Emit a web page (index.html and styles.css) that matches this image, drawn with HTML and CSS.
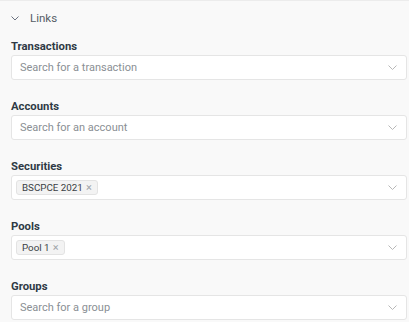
FILE: index.html
```html
<!DOCTYPE html>
<html>

<head>
  <meta charset="UTF-8">
  <title>Links</title>
  <link rel="stylesheet" href="styles.css">
</head>

<body>
  <div class="panel">
    <div class="section-head">
      <svg class="caret" width="8" height="5" viewBox="0 0 8 5"><path d="M0.5 0.5 L4 4 L7.5 0.5" fill="none" stroke="#6b7280" stroke-width="1"/></svg>
      <span>Links</span>
    </div>

    <div class="field">
      <label>Transactions</label>
      <div class="select">
        <span class="placeholder">Search for a transaction</span>
        <svg class="arrow" width="9" height="5" viewBox="0 0 9 5"><path d="M0.5 0.5 L4.5 4.5 L8.5 0.5" fill="none" stroke="#b8b8b8" stroke-width="1"/></svg>
      </div>
    </div>

    <div class="field">
      <label>Accounts</label>
      <div class="select">
        <span class="placeholder">Search for an account</span>
        <svg class="arrow" width="9" height="5" viewBox="0 0 9 5"><path d="M0.5 0.5 L4.5 4.5 L8.5 0.5" fill="none" stroke="#b8b8b8" stroke-width="1"/></svg>
      </div>
    </div>

    <div class="field">
      <label>Securities</label>
      <div class="select">
        <span class="tag">BSCPCE 2021 <span class="x">×</span></span>
        <svg class="arrow" width="9" height="5" viewBox="0 0 9 5"><path d="M0.5 0.5 L4.5 4.5 L8.5 0.5" fill="none" stroke="#b8b8b8" stroke-width="1"/></svg>
      </div>
    </div>

    <div class="field">
      <label>Pools</label>
      <div class="select">
        <span class="tag">Pool 1 <span class="x">×</span></span>
        <svg class="arrow" width="9" height="5" viewBox="0 0 9 5"><path d="M0.5 0.5 L4.5 4.5 L8.5 0.5" fill="none" stroke="#b8b8b8" stroke-width="1"/></svg>
      </div>
    </div>

    <div class="field">
      <label>Groups</label>
      <div class="select">
        <span class="placeholder">Search for a group</span>
        <svg class="arrow" width="9" height="5" viewBox="0 0 9 5"><path d="M0.5 0.5 L4.5 4.5 L8.5 0.5" fill="none" stroke="#b8b8b8" stroke-width="1"/></svg>
      </div>
    </div>
  </div>
</body>

</html>
```

FILE: styles.css
```css
* {
  margin: 0;
  padding: 0;
  box-sizing: border-box;
}

body {
  background: #f9f9f9;
  font-family: Roboto, "Liberation Sans", sans-serif;
  border-top: 1px solid #ececec;
}

.panel {
  padding: 0 2px 0 11px;
}

.section-head {
  display: flex;
  align-items: center;
  height: 34px;
  font-size: 11.5px;
  color: #555d66;
}

.caret {
  margin: 0 11px 0 0;
}

.field {
  margin-bottom: 15px;
}

.field label {
  display: block;
  font-size: 11.3px;
  font-weight: bold;
  color: #2f3a45;
  height: 20px;
  line-height: 16px;
  padding-top: 4px;
}

.select {
  display: flex;
  align-items: center;
  justify-content: space-between;
  height: 25px;
  background: #fff;
  border: 1px solid #e5e5e5;
  border-radius: 3px;
  padding: 0 9px 0 4px;
}

.placeholder {
  font-size: 11px;
  color: #8a8f94;
  padding-left: 4px;
}

.tag {
  display: inline-flex;
  align-items: center;
  height: 15px;
  padding: 0 5px;
  font-size: 9.8px;
  color: #3a3f44;
  background: #f3f3f3;
  border: 1px solid #e3e3e3;
  border-radius: 3px;
}

.tag .x {
  color: #a0a4a8;
  margin-left: 3px;
  font-size: 11px;
}
```
